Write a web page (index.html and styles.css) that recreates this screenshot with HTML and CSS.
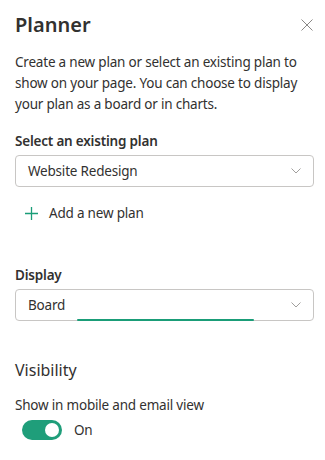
FILE: index.html
```html
<!DOCTYPE html>
<html lang="en">
<head>
<meta charset="utf-8">
<title>Planner</title>
<link rel="stylesheet" href="styles.css">
</head>
<body>
<div class="panel">
  <div class="header">
    <h1 class="title">Planner</h1>
    <button class="close" aria-label="Close">
      <svg width="12" height="12" viewBox="0 0 12 12"><path d="M0.5 0.5 L11.5 11.5 M11.5 0.5 L0.5 11.5" stroke="#8a8886" stroke-width="1" fill="none"/></svg>
    </button>
  </div>
  <p class="intro">Create a new plan or select an existing plan to show on your page. You can choose to display your plan as a board or in charts.</p>

  <div class="field field-plan">
    <div class="label">Select an existing plan</div>
    <div class="select">
      <span class="select-text">Website Redesign</span>
      <svg class="chev" width="10" height="6" viewBox="0 0 10 6"><path d="M0.5 0.5 L5 5 L9.5 0.5" stroke="#a19f9d" stroke-width="1" fill="none"/></svg>
    </div>
    <div class="add">
      <svg width="13" height="13" viewBox="0 0 13 13"><path d="M6.5 0 V13 M0 6.5 H13" stroke="#1a9d78" stroke-width="1.3" fill="none"/></svg>
      <span>Add a new plan</span>
    </div>
  </div>

  <div class="field field-display">
    <div class="label">Display</div>
    <div class="select">
      <span class="select-text">Board</span>
      <svg class="chev" width="10" height="6" viewBox="0 0 10 6"><path d="M0.5 0.5 L5 5 L9.5 0.5" stroke="#a19f9d" stroke-width="1" fill="none"/></svg>
      <span class="focus-bar"></span>
    </div>
  </div>

  <div class="section-title">Visibility</div>
  <div class="toggle-label">Show in mobile and email view</div>
  <div class="toggle-row">
    <span class="toggle"><span class="knob"></span></span>
    <span class="toggle-text">On</span>
  </div>
</div>
</body>
</html>
```

FILE: styles.css
```css
html, body {
  margin: 0;
  padding: 0;
  background: #ffffff;
}
body {
  font-family: "Noto Sans", "Open Sans", sans-serif;
  color: #323130;
  font-size: 13.5px;
  letter-spacing: -0.2px;
}
.panel {
  padding: 9px 11px 0 15px;
}
.header {
  display: flex;
  justify-content: space-between;
  align-items: center;
}
.title {
  margin: 0;
  font-size: 20px;
  font-weight: 600;
  line-height: 32px;
  letter-spacing: 0;
  color: #323130;
}
.close {
  border: 0;
  background: none;
  padding: 0;
  margin-right: 1px;
  width: 12px;
  height: 12px;
  display: flex;
}
.intro {
  margin: 11px 0 0 0;
  line-height: 21px;
}
.field-plan {
  margin-top: 16px;
}
.label {
  font-weight: 600;
  line-height: 20px;
}
.select {
  position: relative;
  margin-top: 4px;
  height: 32px;
  border: 1px solid #c8c6c4;
  border-radius: 4px;
  box-sizing: border-box;
  display: flex;
  align-items: center;
  justify-content: space-between;
  padding: 0 12px 0 12px;
}
.select-text {
  line-height: 20px;
}
.add {
  display: flex;
  align-items: center;
  gap: 11px;
  margin-top: 16px;
  padding-left: 10px;
  line-height: 20px;
}
.field-display {
  margin-top: 42px;
}
.focus-bar {
  position: absolute;
  left: 61px;
  width: 177px;
  bottom: -1px;
  height: 2px;
  background: #1a9d78;
  border-radius: 1px;
}
.section-title {
  margin-top: 38px;
  font-size: 16px;
  line-height: 22px;
  letter-spacing: 0;
}
.toggle-label {
  margin-top: 14px;
  line-height: 20px;
}
.toggle-row {
  display: flex;
  align-items: center;
  gap: 12px;
  margin-top: 5px;
  padding-left: 7px;
}
.toggle {
  width: 40px;
  height: 20px;
  border-radius: 10px;
  background: #1f9e7a;
  display: flex;
  align-items: center;
  justify-content: flex-end;
  padding: 0 3px;
  box-sizing: border-box;
}
.knob {
  width: 14px;
  height: 14px;
  border-radius: 50%;
  background: #ffffff;
}
.toggle-text {
  line-height: 20px;
}
```
